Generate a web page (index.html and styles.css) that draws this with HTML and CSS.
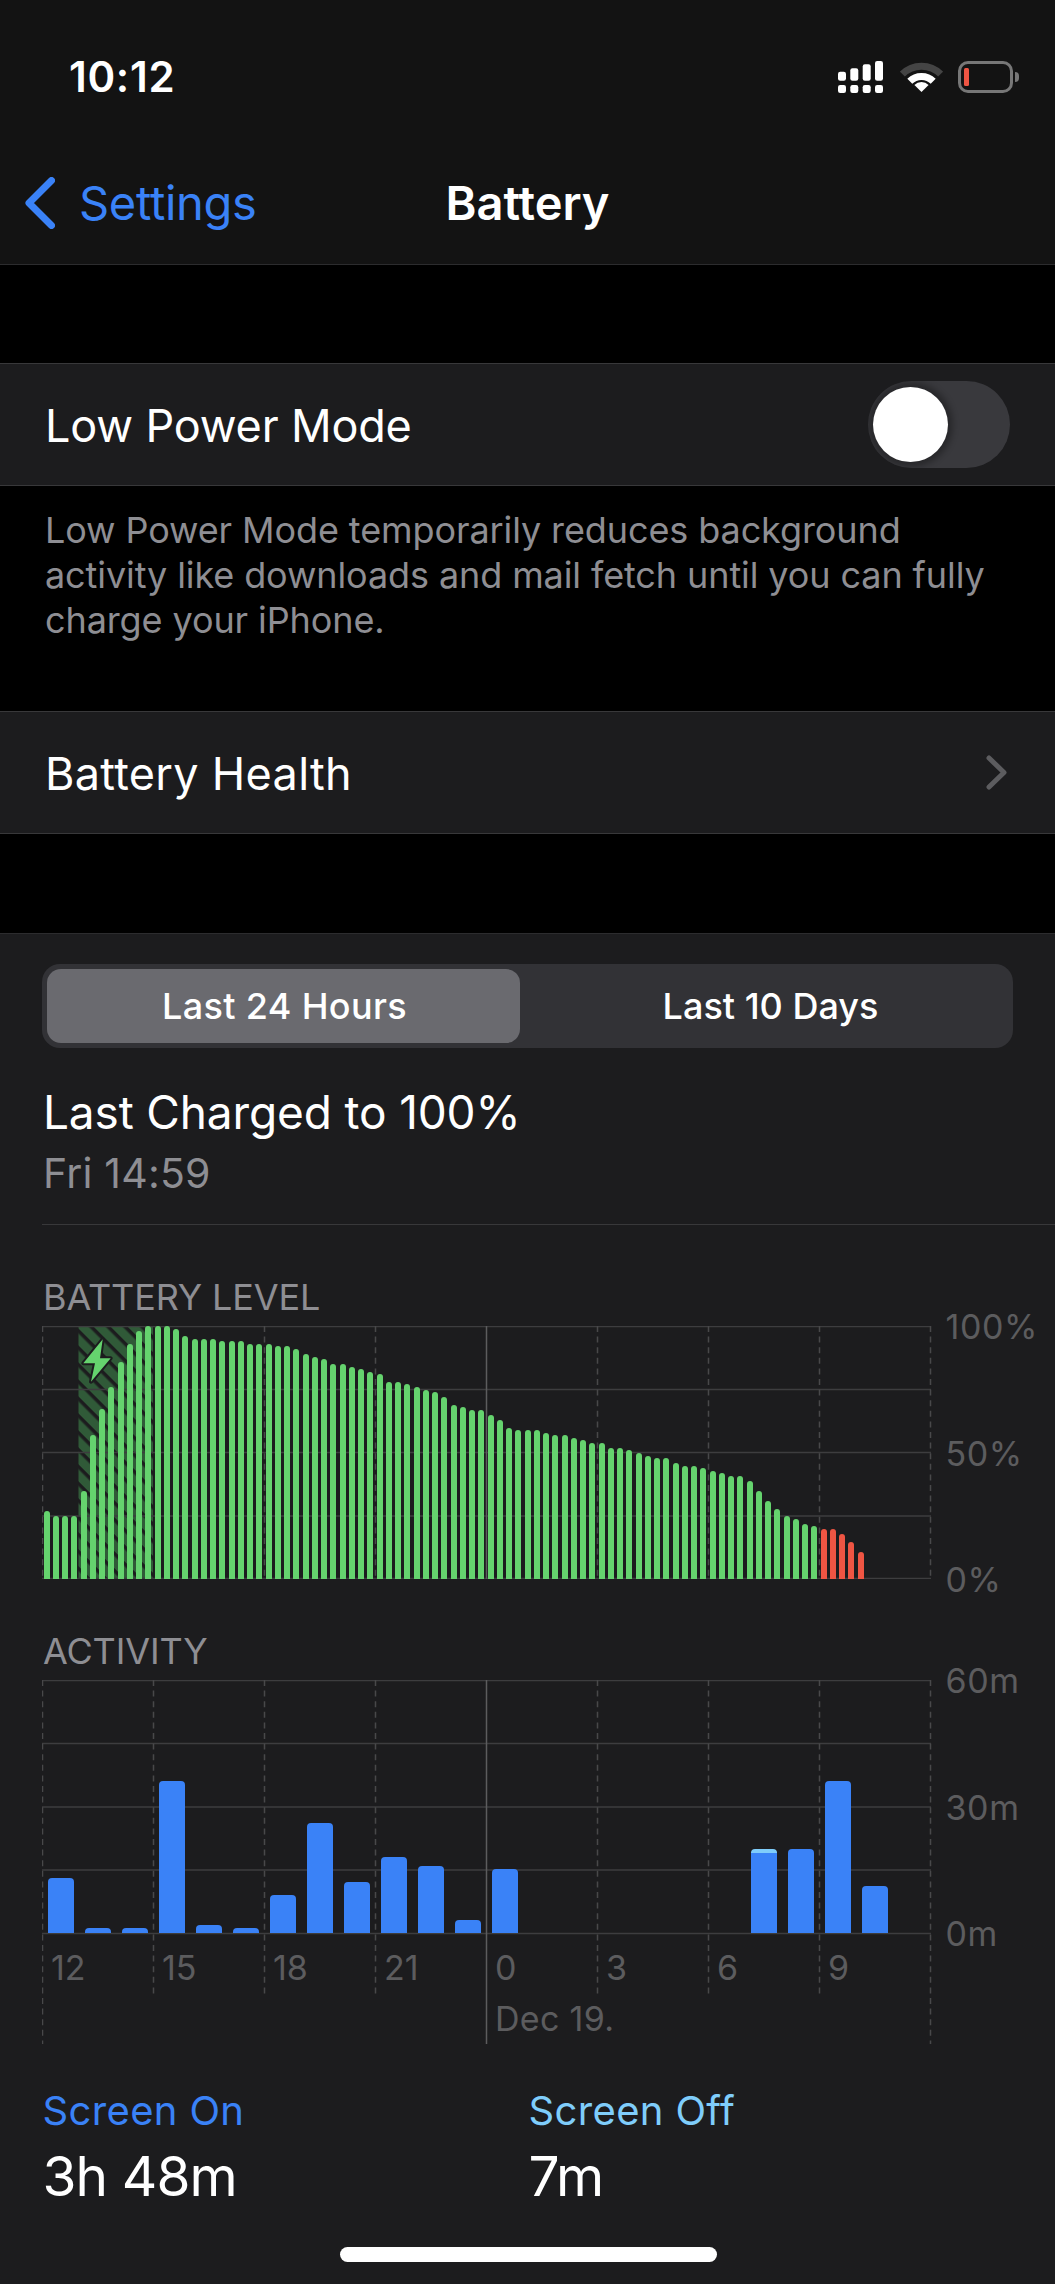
FILE: index.html
```html
<!DOCTYPE html>
<html lang="en">
<head>
<meta charset="utf-8">
<title>Battery</title>
<link rel="stylesheet" href="styles.css">
</head>
<body>
<div class="screen">
  <header class="top">
    <div class="status">
      <span class="time">10:12</span>
      <div class="status-icons">
        <svg class="signal" width="45" height="32" viewBox="0 0 45 32">
          <rect x="0" y="10.7" width="8" height="9" rx="2.2"/><rect x="12.3" y="7.3" width="8" height="12.4" rx="2.2"/><rect x="24.7" y="3.3" width="8" height="16.4" rx="2.2"/><rect x="37" y="0" width="8" height="19.7" rx="2.2"/>
          <rect x="0" y="24" width="8" height="8" rx="2.2"/><rect x="12.3" y="24" width="8" height="8" rx="2.2"/><rect x="24.7" y="24" width="8" height="8" rx="2.2"/><rect x="37" y="24" width="8" height="8" rx="2.2"/>
        </svg>
        <svg class="wifi" width="43" height="31" viewBox="0 0 43 31">
          <path class="wifi-off" d="M2.4 13.1A27 27 0 0 1 40.6 13.1"/>
          <path class="wifi-on" d="M9.8 20.3A16.5 16.5 0 0 1 33.2 20.3"/>
          <path class="wifi-dot" d="M21.5 31L14.4 23.9A10 10 0 0 1 28.6 23.9Z"/>
        </svg>
        <div class="battery-icon"><span class="battery-charge"></span><span class="battery-nub"></span></div>
      </div>
    </div>
    <nav class="navbar">
      <div class="back">
        <svg width="30" height="52" viewBox="0 0 30 52"><path d="M26.5 3.5L4 26L26.5 48.500" /></svg>
        <span>Settings</span>
      </div>
      <h1 class="nav-title">Battery</h1>
    </nav>
  </header>

  <div class="gap gap-first"></div>
  <div class="row">
    <span>Low Power Mode</span>
    <div class="toggle"><span class="knob"></span></div>
  </div>
  <p class="footnote">Low Power Mode temporarily reduces background activity like downloads and mail fetch until you can fully charge your iPhone.</p>
  <div class="row">
    <span class="row-wide">Battery Health</span>
    <svg class="disclosure" width="21" height="35" viewBox="0 0 21 35"><path d="M3 3L18 17.500L3 32"/></svg>
  </div>
  <div class="gap gap-second"></div>

  <main class="panel">
    <div class="segments">
      <div class="segment selected">Last 24 Hours</div>
      <div class="segment second">Last 10 Days</div>
    </div>
    <div class="charged">
      <div class="charged-title">Last Charged to 100%</div>
      <div class="charged-time">Fri 14:59</div>
    </div>

    <section class="chart-section battery-section">
      <h2 class="chart-label">BATTERY LEVEL</h2>
      <div class="chart-row">
        <div class="chart">
          <svg class="grid" width="890" height="253" viewBox="0 0 890 253">
            <defs>
              <pattern id="hatch" width="12" height="12" patternUnits="userSpaceOnUse" patternTransform="rotate(45)">
                <rect width="12" height="12" fill="#305a38"/>
                <rect width="12" height="3.5" fill="#1c1c1e"/>
              </pattern>
            </defs>
            <rect x="36.500" y="0" width="74.500" height="253" fill="url(#hatch)"/>
            <path class="h-line" d="M0 .5H889M0 63.500H889M0 126.500H889M0 190H889M0 252.500H889"/>
            <path class="v-dash" d="M.5 0V253M222.500 0V253M333.500 0V253M555.500 0V253M666.500 0V253M777.500 0V253M888.500 0V253"/>
            <path class="v-solid" d="M444.500 0V253"/>
            <path class="bolt" d="M60.700 13.300L41.300 37.300H53L49 55.700L68.700 32.300H58Z"/>
          </svg>
          <div class="plot plot-battery">
            <i class="bar" style="height:68.3px"></i><i class="bar" style="height:63px"></i><i class="bar" style="height:63px"></i><i class="bar" style="height:63px"></i><i class="bar" style="height:88.3px"></i><i class="bar" style="height:144px"></i><i class="bar" style="height:169.7px"></i><i class="bar" style="height:192.3px"></i><i class="bar" style="height:217.3px"></i><i class="bar" style="height:235.3px"></i>
            <i class="bar" style="height:248px"></i><i class="bar" style="height:253px"></i><i class="bar" style="height:253px"></i><i class="bar" style="height:253px"></i><i class="bar" style="height:250.3px"></i><i class="bar" style="height:242.7px"></i><i class="bar" style="height:240.3px"></i><i class="bar" style="height:240.3px"></i><i class="bar" style="height:240.3px"></i><i class="bar" style="height:237.7px"></i>
            <i class="bar" style="height:237.7px"></i><i class="bar" style="height:237.7px"></i><i class="bar" style="height:235.3px"></i><i class="bar" style="height:235.3px"></i><i class="bar" style="height:235.3px"></i><i class="bar" style="height:232.7px"></i><i class="bar" style="height:232.7px"></i><i class="bar" style="height:230px"></i><i class="bar" style="height:225px"></i><i class="bar" style="height:222.3px"></i>
            <i class="bar" style="height:220px"></i><i class="bar" style="height:215px"></i><i class="bar" style="height:215px"></i><i class="bar" style="height:212.3px"></i><i class="bar" style="height:209.7px"></i><i class="bar" style="height:207.3px"></i><i class="bar" style="height:204.7px"></i><i class="bar" style="height:197px"></i><i class="bar" style="height:197px"></i><i class="bar" style="height:194.7px"></i>
            <i class="bar" style="height:192px"></i><i class="bar" style="height:189.3px"></i><i class="bar" style="height:187px"></i><i class="bar" style="height:181.7px"></i><i class="bar" style="height:174px"></i><i class="bar" style="height:171.7px"></i><i class="bar" style="height:169px"></i><i class="bar" style="height:169px"></i><i class="bar" style="height:164px"></i><i class="bar" style="height:159px"></i>
            <i class="bar" style="height:151.3px"></i><i class="bar" style="height:149px"></i><i class="bar" style="height:149px"></i><i class="bar" style="height:149px"></i><i class="bar" style="height:146.3px"></i><i class="bar" style="height:144px"></i><i class="bar" style="height:144px"></i><i class="bar" style="height:141.3px"></i><i class="bar" style="height:138.7px"></i><i class="bar" style="height:136.3px"></i>
            <i class="bar" style="height:136.3px"></i><i class="bar" style="height:131px"></i><i class="bar" style="height:131px"></i><i class="bar" style="height:128.7px"></i><i class="bar" style="height:126px"></i><i class="bar" style="height:123.3px"></i><i class="bar" style="height:121px"></i><i class="bar" style="height:121px"></i><i class="bar" style="height:116px"></i><i class="bar" style="height:113.3px"></i>
            <i class="bar" style="height:113.3px"></i><i class="bar" style="height:111px"></i><i class="bar" style="height:108.3px"></i><i class="bar" style="height:105.7px"></i><i class="bar" style="height:103px"></i><i class="bar" style="height:103px"></i><i class="bar" style="height:98px"></i><i class="bar" style="height:88px"></i><i class="bar" style="height:78px"></i><i class="bar" style="height:70.3px"></i>
            <i class="bar" style="height:62.7px"></i><i class="bar" style="height:60.3px"></i><i class="bar" style="height:55px"></i><i class="bar" style="height:52.7px"></i><i class="bar low" style="height:50.3px"></i><i class="bar low" style="height:50.3px"></i><i class="bar low" style="height:45px"></i><i class="bar low" style="height:37.3px"></i><i class="bar low" style="height:27.3px"></i>
          </div>
        </div>
        <div class="y-axis"><span>100%</span><span>50%</span><span>0%</span></div>
      </div>
    </section>

    <section class="chart-section activity-section">
      <h2 class="chart-label">ACTIVITY</h2>
      <div class="chart-row">
        <div class="chart">
          <svg class="grid" width="890" height="364" viewBox="0 0 890 364">
            <path class="h-line" d="M0 .5H889M0 63.500H889M0 127H889M0 190H889M0 253.500H889"/>
            <path class="v-dash" d="M.5 0V364M888.500 0V364M111.500 0V317M222.500 0V317M333.500 0V317M555.500 0V317M666.500 0V317M777.500 0V317"/>
            <path class="v-solid" d="M444.500 0V364"/>
          </svg>
          <div class="plot plot-activity">
            <i class="use" style="height:55px"></i><i class="use" style="height:4.7px"></i><i class="use" style="height:4.7px"></i><i class="use" style="height:152px"></i><i class="use" style="height:8.3px"></i><i class="use" style="height:4.7px"></i><i class="use" style="height:38.3px"></i><i class="use" style="height:110px"></i><i class="use" style="height:50.7px"></i><i class="use" style="height:76.3px"></i><i class="use" style="height:67.3px"></i><i class="use" style="height:13px"></i><i class="use" style="height:63.7px"></i>
            <i class="use none"></i><i class="use none"></i><i class="use none"></i><i class="use none"></i><i class="use none"></i><i class="use none"></i>
            <i class="use mixed" style="height:84.3px"></i><i class="use" style="height:84.3px"></i><i class="use" style="height:152px"></i><i class="use" style="height:46.7px"></i>
          </div>
          <div class="hours"><span>12</span><span>15</span><span>18</span><span>21</span><span>0</span><span>3</span><span>6</span><span>9</span></div>
          <div class="date">Dec 19.</div>
        </div>
        <div class="y-axis"><span>60m</span><span>30m</span><span>0m</span></div>
      </div>
    </section>

    <div class="totals">
      <div class="total">
        <div class="total-label on">Screen On</div>
        <div class="total-value">3h 48m</div>
      </div>
      <div class="total">
        <div class="total-label off">Screen Off</div>
        <div class="total-value">7m</div>
      </div>
    </div>
    <div class="home-bar"></div>
  </main>
</div>
</body>
</html>
```

FILE: styles.css
```css
* { box-sizing: border-box; }
html, body { margin: 0; padding: 0; background: #000; }
body { font-family: "Inter", "Liberation Sans", sans-serif; color: #fff; }
.screen { width: 1055px; height: 2284px; display: flex; flex-direction: column; overflow: hidden; }

/* header */
.top { height: 265px; flex: none; background: #131313; border-bottom: 1px solid #2c2c2e; }
.status { height: 130px; padding: 54px 42px 0 69px; display: flex; justify-content: space-between; align-items: flex-start; }
.time { font-size: 42px; line-height: 46px; font-weight: 600; letter-spacing: 0.7px; }
.status-icons { display: flex; align-items: flex-start; padding-top: 7px; }
.signal { fill: #fff; margin-right: 17px; }
.wifi { margin-right: 15px; }
.wifi-off { fill: none; stroke: #444; stroke-width: 7; }
.wifi-on { fill: none; stroke: #fff; stroke-width: 7; }
.wifi-dot { fill: #fff; }
.battery-icon { width: 55px; height: 32px; border: 3px solid #777; border-radius: 10px; position: relative; padding: 4px 3px; }
.battery-charge { display: block; width: 5px; height: 18px; background: #ef5543; border-radius: 1.5px; }
.battery-nub { position: absolute; left: 54px; top: 8px; width: 4px; height: 10px; background: #777; border-radius: 0 5px 5px 0; }
.navbar { height: 134px; padding: 11px 0 0 25px; display: flex; align-items: center; position: relative; }
.back { display: flex; align-items: center; gap: 24px; color: #3a82f7; font-size: 47px; letter-spacing: -0.3px; }
.back svg { fill: none; stroke: currentColor; stroke-width: 7; stroke-linecap: round; stroke-linejoin: round; }
.nav-title { position: absolute; left: 0; right: 0; top: 11px; bottom: 0; margin: 0; display: flex; align-items: center; justify-content: center; font-size: 47px; font-weight: 600; letter-spacing: 0; }

/* settings list */
.gap { flex: none; background: #000; }
.gap-first { height: 98px; }
.gap-second { height: 99px; }
.row { flex: none; height: 123px; padding: 2px 48px 0 45px; background: #1c1c1e; border-top: 1px solid #38383a; border-bottom: 1px solid #38383a; display: flex; align-items: center; justify-content: space-between; font-size: 45px; letter-spacing: -0.17px; }
.row-wide { letter-spacing: 0.3px; }
.toggle { width: 142px; height: 87px; margin: -2px -3px 0 0; background: #39393d; border-radius: 44px; padding: 6px 6px 6px 5px; overflow: hidden; }
.knob { display: block; width: 75px; height: 75px; background: #fff; border-radius: 50%; box-shadow: 0 0 6px 5px rgba(0, 0, 0, .3); }
.disclosure { margin-top: -2px; fill: none; stroke: #5c5c5f; stroke-width: 5; stroke-linecap: round; stroke-linejoin: round; }
.footnote { flex: none; height: 225px; margin: 0; padding: 22px 30px 0 45px; background: #000; color: #8e8e93; font-size: 36px; line-height: 45px; letter-spacing: -0.1px; }

/* panel */
.panel { flex: 1; background: #1c1c1e; border-top: 1px solid #2c2c2e; padding-top: 30px; position: relative; }
.segments { margin: 0 42px; height: 84px; padding: 5px; background: #323236; border-radius: 18px; display: grid; grid-template-columns: 473px 1fr; }
.segment { display: flex; align-items: center; justify-content: center; font-size: 36px; font-weight: 500; letter-spacing: 0; }
.segment.second { padding-left: 13px; }
.segment.selected { background: #6a6a6f; border-radius: 14px; letter-spacing: 0.35px; padding-left: 2px; }
.charged { margin: 36px 0 0 42px; padding: 0 0 26px 1px; border-bottom: 1.5px solid #38383a; }
.charged-title { font-size: 46px; line-height: 56px; letter-spacing: -0.15px; }
.charged-time { font-size: 41px; line-height: 50px; margin-top: 8px; color: #8e8e93; letter-spacing: 0.2px; }

/* charts */
.chart-section { margin-left: 42px; }
.battery-section { margin-top: 51px; }
.activity-section { margin-top: 34px; }
.chart-label { margin: 0 0 8px 1px; font-size: 36px; line-height: 42px; font-weight: 400; color: #8e8e93; letter-spacing: -0.15px; }
.chart-row { display: flex; }
.chart { width: 890px; position: relative; flex: none; }
.grid { position: absolute; left: 0; top: 0; }
.h-line { fill: none; stroke: #3d3d3f; stroke-width: 1.5; }
.v-dash { fill: none; stroke: #48484a; stroke-width: 1.5; stroke-dasharray: 6 4.6; }
.v-solid { fill: none; stroke: #5c5c5e; stroke-width: 1.5; }
.bolt { fill: #65d36e; stroke: #1c1c1e; stroke-width: 4; paint-order: stroke; stroke-linejoin: round; }
.plot { position: relative; height: 253px; display: flex; align-items: flex-end; }
.plot-battery { display: grid; grid-template-columns: repeat(96, 9.25px); align-items: end; justify-items: center; }
.bar { display: block; width: 6px; background: #65d36e; border-radius: 3px 3px 0 0; }
.bar.low { background: #ef5543; }
.plot-activity { padding-left: 6px; gap: 11px; }
.use { display: block; flex: none; width: 26px; background: #3a82f7; border-radius: 4px 4px 0 0; }
.use.none { height: 0; }
.use.mixed { border-top: 4px solid #7fcdfb; }
.y-axis { flex: none; height: 285px; margin: -15px 0 0 13.5px; display: flex; flex-direction: column; justify-content: space-between; color: #5c5c5e; font-size: 34px; line-height: 32px; letter-spacing: 0.6px; }
.y-axis span { display: block; }
.hours { position: relative; display: grid; grid-template-columns: repeat(8, 111px); padding-top: 15px; color: #5c5c5e; font-size: 34px; line-height: 40px; letter-spacing: 0; }
.hours span { padding-left: 9px; }
.date { position: relative; margin-top: 11px; padding-left: 453px; color: #5c5c5e; font-size: 34px; line-height: 40px; letter-spacing: 0.3px; }

/* totals */
.totals { margin: 49px 0 0 42.5px; display: grid; grid-template-columns: 486px 1fr; }
.total-label { font-size: 40px; line-height: 46px; letter-spacing: 0.35px; }
.total-label.on { color: #3a82f7; }
.total-label.off { color: #7fcdfb; }
.total-value { font-size: 55px; line-height: 64px; margin-top: 10px; letter-spacing: -0.9px; }
.home-bar { position: absolute; left: 340px; top: 1313px; width: 377px; height: 15px; background: #fff; border-radius: 8px; }
```
